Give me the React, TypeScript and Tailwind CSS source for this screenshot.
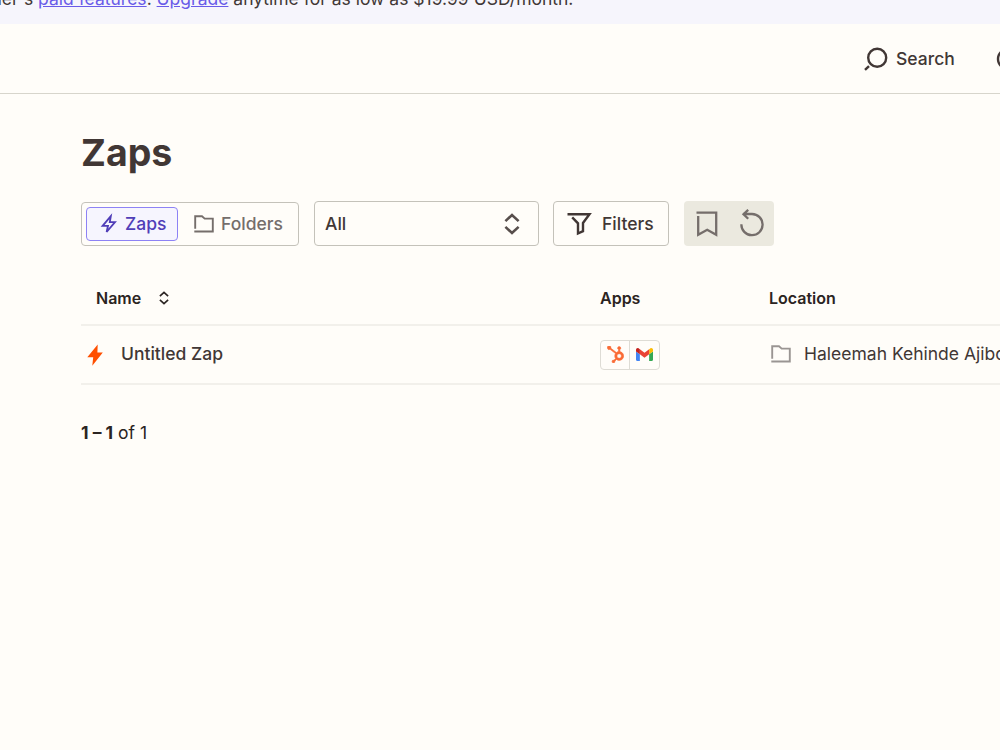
import { SiHubspot } from 'react-icons/si';

const FolderIcon = ({ className }: { className?: string }) => (
    <svg width="20" height="18" viewBox="0 0 20 18" fill="none" stroke="currentColor" strokeWidth="1.9" className={className}>
        <path d="M1.2 13.7V1.3H8l2.7 2.3h8.1v12.9H.3" />
    </svg>
);

const SortIcon = ({ className }: { className?: string }) => (
    <svg viewBox="0 0 16 22" fill="none" stroke="currentColor" strokeWidth="2.6" className={className}>
        <path d="M1.4 8.1 8 2l6.6 6.1M1.4 13.9 8 20l6.6-6.1" />
    </svg>
);

const GmailIcon = () => (
    <svg width="17" height="13" viewBox="52 42 88 66" className="mb-px">
        <path fill="#4285f4" d="M58 108h14V74L52 59v43c0 3.32 2.69 6 6 6" />
        <path fill="#34a853" d="M120 108h14c3.32 0 6-2.69 6-6V59l-20 15" />
        <path fill="#fbbc04" d="M120 48v26l20-15v-8c0-7.42-8.47-11.65-14.4-7.2" />
        <path fill="#ea4335" d="M72 74V48l24 18 24-18v26L96 92" />
        <path fill="#c5221f" d="M52 51v8l20 15V48l-5.6-4.2c-5.94-4.45-14.4-.22-14.4 7.2" />
    </svg>
);

const Banner = () => (
    <div className="relative h-6 bg-[#f6f5fc] overflow-hidden">
        <p className="absolute -left-[8.5px] -top-[13px] whitespace-nowrap text-[17.5px] leading-[24px]">
            ner's <a className="text-[#695be8] underline">paid features</a>.{' '}
            <a className="text-[#695be8] underline">Upgrade</a> anytime for as low as $19.99 USD/month.
        </p>
    </div>
);

const TopBar = () => (
    <header className="flex items-center h-[70px] pl-[864px] border-b border-[#d7d5cc] overflow-hidden">
        <svg width="24" height="24" viewBox="0 0 24 24" fill="none" stroke="currentColor" strokeWidth="2.4" className="shrink-0">
            <circle cx="13.2" cy="10.7" r="9" />
            <path d="m5 19.2-4 3.6" />
        </svg>
        <span className="ml-2 pt-0.5 w-[100px] shrink-0 text-[17.5px] font-medium">Search</span>
        <svg width="24" height="24" viewBox="0 0 24 24" fill="none" stroke="currentColor" strokeWidth="2.4" className="shrink-0">
            <circle cx="12" cy="12" r="10" />
        </svg>
    </header>
);

const Toolbar = () => (
    <div className="flex mt-[24px] h-[45px] text-[17.5px] font-medium">
        <div className="flex w-[218px] mt-px h-11 p-1 border border-[#c4c2ba] rounded-[4px]">
            <button className="flex items-center w-[92px] h-[34px] pl-[13px] border border-[#8d82f5] rounded-[4px] bg-[#f6f5fe] text-[#503eb8]">
                <svg width="18" height="22" viewBox="0 0 18 22" fill="none" stroke="currentColor" strokeWidth="1.8">
                    <path d="M10.8 3.2 2.6 12.8H8L6.6 19 15 9.2H9.8z" />
                </svg>
                <span className="ml-[7px]">Zaps</span>
            </button>
            <button className="flex items-center ml-4 h-[34px] text-[#756e6b]">
                <FolderIcon />
                <span className="ml-[7px]">Folders</span>
            </button>
        </div>
        <button className="flex items-center justify-between ml-[15px] w-[225px] pl-[10px] pr-[18px] border border-[#c4c2ba] rounded-[4px]">
            <span className="pt-px">All</span>
            <SortIcon className="w-4 h-[22px] text-[#574e4c]" />
        </button>
        <button className="flex items-center ml-[14px] w-[116px] pl-[13px] border border-[#c4c2ba] rounded-[4px]">
            <svg width="25" height="24" viewBox="0 0 25 24" fill="none" stroke="currentColor" strokeWidth="2.4">
                <path d="M.5 2.2h22L16 11v8.2l-5 2.3V11.3L5.2 5.4" />
            </svg>
            <span className="ml-[10px] pt-px">Filters</span>
        </button>
        <div className="flex items-center ml-[15px] w-[90px] pl-3 rounded-[4px] bg-[#ebe9df] text-[#756e6b]">
            <svg width="22" height="26" viewBox="0 0 22 26" fill="none" stroke="currentColor" strokeWidth="2.3">
                <path d="M.5 1.6h19.7v22.2l-9-5-9 5V5" />
            </svg>
            <svg width="26" height="28" viewBox="0 0 26 28" fill="none" stroke="currentColor" strokeWidth="2.3" className="ml-[21px] mb-px">
                <path d="M2.4 15.2A10.6 10.6 0 1 0 13 5H4M9.2.8 4.5 5.2l4.7 4.6" />
            </svg>
        </div>
    </div>
);

const ZapTable = () => (
    <div className="mt-[26px]">
        <div className="flex items-center h-[54px] pl-[15px] border-b-2 border-[#f2f0eb] text-[16px] font-semibold text-[#2b2422]">
            <div className="flex items-center w-[504px]">
                Name
                <SortIcon className="ml-[18px] w-[10px] h-[14px]" />
            </div>
            <div className="w-[169px]">Apps</div>
            <div>Location</div>
        </div>
        <div className="flex items-center h-[59px] pl-[6px] border-b-2 border-[#f2f0eb] overflow-hidden">
            <svg width="16" height="22" viewBox="0 0 16 22" fill="#ff4f00" className="shrink-0">
                <path d="M10.7.5.3 13.2h5.9L5.3 21.7 15.8 8.6h-5.4z" />
            </svg>
            <div className="ml-[18px] w-[479px] shrink-0 text-[17.5px] font-medium">Untitled Zap</div>
            <div className="flex w-[60px] h-[30px] shrink-0 border border-[#dedcd5] rounded-[4px]">
                <div className="flex items-center justify-center w-[29px] border-r border-[#dedcd5] text-[#fa6b35]">
                    <SiHubspot size={17} className="ml-px stroke-[0.8]" />
                </div>
                <div className="flex items-center justify-center w-[29px]">
                    <GmailIcon />
                </div>
            </div>
            <FolderIcon className="ml-[110.5px] mb-0.5 shrink-0 text-[#9a9593]" />
            <span className="ml-[13.5px] shrink-0 whitespace-nowrap text-[17.5px]">Haleemah Kehinde Ajibola</span>
        </div>
    </div>
);

export default function App() {
    return (
        <div className="h-[750px] overflow-hidden bg-[#fffdf9] font-['Inter',sans-serif] text-[#413735]">
            <Banner />
            <TopBar />
            <main className="pl-[81px]">
                <h1 className="pt-[35px] text-[37.5px] leading-[48px] font-bold">Zaps</h1>
                <Toolbar />
                <ZapTable />
                <p className="mt-[35px] text-[17.5px] leading-[26px] text-[#2b2422]">
                    <b className="font-bold">1 – 1</b> of 1
                </p>
            </main>
        </div>
    );
}
